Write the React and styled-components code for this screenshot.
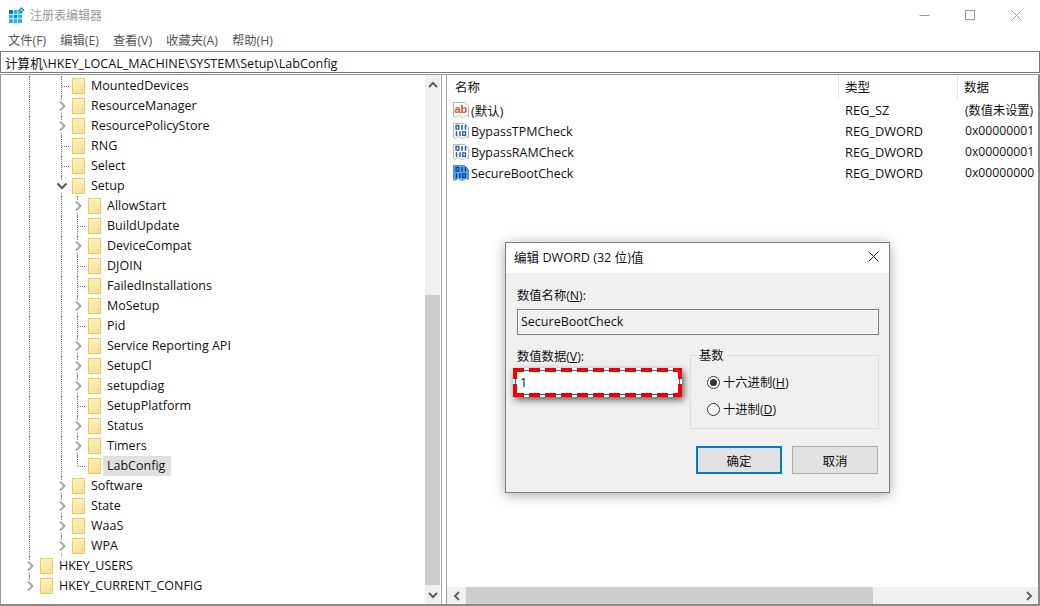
import React from "react";
import styled, { createGlobalStyle } from "styled-components";

const FONT = `"Open Sans", "Noto Sans CJK SC", sans-serif`;

const GlobalStyle = createGlobalStyle`
  html, body {
    margin: 0;
    padding: 0;
    background: #fff;
    overflow: hidden;
  }
  * {
    box-sizing: border-box;
  }
`;

const Window = styled.div`
  position: relative;
  width: 1040px;
  height: 606px;
  display: flex;
  flex-direction: column;
  background: #fff;
  font-family: ${FONT};
  font-size: 12.5px;
  color: #111;
`;

const TitleBar = styled.div`
  height: 30px;
  display: flex;
  align-items: center;
  padding-left: 9px;
  color: #9a9a9a;
  font-size: 12px;
`;

const TitleText = styled.span`
  margin-left: 5px;
`;

const WindowButtons = styled.div`
  margin-left: auto;
  display: flex;
  padding-right: 1px;
`;

const WindowButton = styled.div`
  width: 46px;
  height: 30px;
  display: flex;
  align-items: center;
  justify-content: center;
`;

const MenuBar = styled.div`
  height: 20px;
  display: flex;
  align-items: center;
  gap: 14px;
  padding-left: 8px;
  color: #555;
  font-size: 12.3px;
`;

const AddressBar = styled.div`
  height: 22px;
  margin-top: 1px;
  display: flex;
  align-items: center;
  padding-left: 4px;
  border: 1px solid #7a7a7a;
  font-size: 12.6px;
  color: #111;
`;

const Panes = styled.div`
  flex: 1;
  min-height: 0;
  display: flex;
  border-top: 1px solid #9a9a9a;
  border-left: 1px solid #9a9a9a;
  border-right: 2px solid #8a8a8a;
  border-bottom: 2px solid #8a8a8a;
  margin-top: 1px;
`;

const TreePane = styled.div`
  width: 441px;
  display: flex;
  border-right: 1px solid #a0a0a0;
`;

const Tree = styled.div`
  flex: 1;
  padding: 1px 0 0 21px;
  min-width: 0;
`;

const TreeRow = styled.div`
  height: 20px;
  display: flex;
  align-items: center;
`;

const GuideCell = styled.div`
  position: relative;
  width: 16px;
  height: 20px;
  flex: none;
  ${(p) =>
    p.$line &&
    `&::before {
      content: "";
      position: absolute;
      left: 7px;
      top: 0;
      height: ${p.$half ? "10px" : "20px"};
      border-left: 1px dotted #777;
    }`}
  ${(p) =>
    p.$twig &&
    `&::after {
      content: "";
      position: absolute;
      left: 8px;
      top: 10px;
      width: 7px;
      border-top: 1px dotted #777;
    }`}
`;

const ChevronBox = styled.span`
  position: absolute;
  left: 2px;
  top: 4px;
  width: 12px;
  height: 12px;
  background: #fff;
  display: flex;
  align-items: center;
  justify-content: center;
`;

const FolderBox = styled.span`
  flex: none;
  width: 13px;
  height: 16px;
  margin-left: 2px;
  display: flex;
`;

const TreeLabel = styled.span`
  margin-left: ${(p) => (p.$selected ? "2px" : "4px")};
  padding: 0 ${(p) => (p.$selected ? "6px" : "3px")} 0 ${(p) => (p.$selected ? "4px" : "2px")};
  height: 20px;
  line-height: 20px;
  white-space: nowrap;
  background: ${(p) => (p.$selected ? "#e0e0e0" : "transparent")};
`;

const VScroll = styled.div`
  width: 15px;
  flex: none;
  margin-right: 1px;
  display: flex;
  flex-direction: column;
  background: #f0f0f0;
`;

const ScrollArrow = styled.div`
  width: ${(p) => (p.$h ? "19px" : "15px")};
  height: ${(p) => (p.$h ? "17px" : "19px")};
  flex: none;
  display: flex;
  align-items: center;
  justify-content: center;
`;

const ScrollSpace = styled.div`
  flex: 1;
`;

const VThumb = styled.div`
  height: 290px;
  background: #cdcdcd;
  flex: none;
`;

const Splitter = styled.div`
  width: 5px;
  flex: none;
  background: #fff;
  border-right: 1px solid #a0a0a0;
`;

const ListPane = styled.div`
  flex: 1;
  min-width: 0;
  display: flex;
  flex-direction: column;
`;

const ListHeader = styled.div`
  height: 24px;
  display: flex;
  flex: none;
`;

const HeaderCell = styled.div`
  width: ${(p) => p.$w}px;
  padding-left: ${(p) => p.$pl || 6}px;
  line-height: 25px;
  font-size: 12.5px;
  border-right: ${(p) => (p.$end ? "none" : "1px solid #e5e5e5")};
`;

const ListBody = styled.div`
  flex: 1;
  min-height: 0;
`;

const ListRow = styled.div`
  height: 21px;
  display: flex;
  align-items: center;
`;

const NameCell = styled.div`
  width: 398px;
  display: flex;
  align-items: center;
  padding-left: 6px;
  white-space: nowrap;
`;

const NameText = styled.span`
  margin-top: 2px;
`;

const ValueIcon = styled.span`
  width: 16px;
  height: 16px;
  flex: none;
  margin-right: 2px;
  display: flex;
`;

const TypeCell = styled.div`
  width: 120px;
  white-space: nowrap;
  font-size: 12.8px;
`;

const DataCell = styled.div`
  white-space: nowrap;
  font-size: 12.2px;
  overflow: hidden;
`;

const HScroll = styled.div`
  height: 17px;
  flex: none;
  display: flex;
  background: #f0f0f0;
`;

const HThumb = styled.div`
  width: 407px;
  background: #cdcdcd;
  flex: none;
`;

const Dialog = styled.div`
  position: absolute;
  left: 505px;
  top: 242px;
  width: 385px;
  height: 251px;
  display: flex;
  flex-direction: column;
  background: #f0f0f0;
  border: 1px solid #7d7d7d;
  box-shadow: 0 2px 12px rgba(0, 0, 0, 0.35);
`;

const DialogTitle = styled.div`
  height: 30px;
  flex: none;
  background: #fff;
  display: flex;
  align-items: center;
  justify-content: space-between;
  padding: 0 10px 3px 8px;
  font-size: 12.6px;
`;

const DialogBody = styled.div`
  flex: 1;
  padding: 14px 10px 0 11px;
  display: flex;
  flex-direction: column;
`;

const FieldLabel = styled.label`
  display: block;
  height: 18px;
  line-height: 18px;
  font-size: 12.3px;
  color: #111;
  u {
    text-underline-offset: 1px;
  }
`;

const NameInput = styled.div`
  margin-top: 4px;
  height: 26px;
  width: 362px;
  border: 1px solid #7a7a7a;
  background: #f0f0f0;
  box-shadow: inset 0 0 0 1px #fff;
  padding-left: 3px;
  line-height: 23px;
  font-size: 12.5px;
`;

const DataRow = styled.div`
  margin-top: 13px;
  display: flex;
  justify-content: space-between;
  width: 362px;
`;

const DataColumn = styled.div`
  width: 168px;
  margin-left: -3px;
  padding-left: 3px;
`;

const DashedFrame = styled.div`
  position: relative;
  margin: 2px 0 0 -4px;
  width: 169px;
  height: 29px;
  padding: 2px;
  box-shadow: 2px 3px 7px rgba(0, 0, 0, 0.6);
  background: #fff;
  &::after {
    content: "";
    position: absolute;
    inset: 0;
    background:
      linear-gradient(90deg, #f00000 11px, transparent 11px) 0 0 / 16px 4px repeat-x,
      linear-gradient(90deg, #f00000 11px, transparent 11px) 0 100% / 16px 4px repeat-x,
      linear-gradient(#f00000 11px, transparent 11px) 0 0 / 4px 16px repeat-y,
      linear-gradient(#f00000 11px, transparent 11px) 100% 0 / 4px 16px repeat-y;
  }
`;

const DataInput = styled.div`
  height: 100%;
  border: 1px solid #0078d7;
  background: #fff;
  padding-left: 4px;
  line-height: 24px;
  font-size: 12.5px;
`;

const RadixGroup = styled.fieldset`
  position: relative;
  margin: 7px 0 0;
  width: 189px;
  height: 74px;
  border: 1px solid #dcdcdc;
  display: flex;
  flex-direction: column;
  align-items: flex-start;
  padding: 17px 0 0 16px;
  gap: 9px;
`;

const GroupTitle = styled.span`
  position: absolute;
  left: 6px;
  top: -9px;
  padding: 0 3px 0 2px;
  background: #f0f0f0;
  font-size: 12.3px;
  line-height: 18px;
`;

const RadioRow = styled.div`
  display: flex;
  align-items: center;
  height: 18px;
  font-size: 12.3px;
  gap: 3px;
`;

const RadioDot = styled.span`
  width: 13px;
  height: 13px;
  flex: none;
  border-radius: 50%;
  border: 1px solid #333;
  background: #fff;
  display: flex;
  align-items: center;
  justify-content: center;
  &::after {
    content: "";
    width: 7px;
    height: 7px;
    border-radius: 50%;
    background: ${(p) => (p.$on ? "#333" : "transparent")};
  }
`;

const ButtonRow = styled.div`
  margin-top: 17px;
  width: 361px;
  display: flex;
  justify-content: flex-end;
  gap: 10px;
`;

const DialogButton = styled.button`
  width: 86px;
  height: 28px;
  margin: 0;
  padding: 0;
  background: #e1e1e1;
  border: ${(p) => (p.$primary ? "2px solid #0078d7" : "1px solid #adadad")};
  font-family: ${FONT};
  font-size: 12.5px;
  color: #111;
`;

const RegistryIcon = () => (
  <svg width="16" height="16" viewBox="0 0 16 16">
    <rect x="0" y="3" width="13" height="13" fill="#1fb0f0" />
    <path d="M0 3h4v4H0z" fill="#0a6ab8" />
    <path d="M4.5 7.5h4v4h-4z" fill="#0f86d8" />
    <path d="M4.3 3v13M8.7 3v13M0 7.3h13M0 11.7h13" stroke="#fff" strokeWidth="0.8" />
    <path d="M12.5 0l3 3-3 3-3-3z" fill="#2a8fd0" />
    <circle cx="12.5" cy="3" r="1.1" fill="#bfe6fa" />
  </svg>
);

const MinimizeIcon = () => (
  <svg width="11" height="11" viewBox="0 0 11 11">
    <path d="M0.5 5.5h10" stroke="#999" strokeWidth="1" />
  </svg>
);

const MaximizeIcon = () => (
  <svg width="10" height="10" viewBox="0 0 10 10">
    <rect x="0.5" y="0.5" width="9" height="9" fill="none" stroke="#999" />
  </svg>
);

const CloseIcon = ({ color = "#999" }) => (
  <svg width="11" height="11" viewBox="0 0 11 11">
    <path d="M0.5 0.5l10 10M10.5 0.5l-10 10" stroke={color} strokeWidth="1" />
  </svg>
);

const FolderIcon = () => (
  <svg width="13" height="16" viewBox="0 0 13 16">
    <defs>
      <linearGradient id="folderFill" x1="0" y1="0" x2="0" y2="1">
        <stop offset="0" stopColor="#ffefb8" />
        <stop offset="1" stopColor="#fbe29a" />
      </linearGradient>
    </defs>
    <rect x="0.5" y="0.5" width="12" height="15" fill="url(#folderFill)" stroke="#eecb62" />
    <path d="M10 15.5v-4h2.5" fill="#fff4cf" stroke="#eecb62" />
  </svg>
);

const Chevron = ({ open }) => (
  <svg width="12" height="12" viewBox="0 0 12 12">
    {open ? (
      <path d="M1.5 3.5L6 8l4.5-4.5" fill="none" stroke="#555" strokeWidth="2" />
    ) : (
      <path d="M4 1.5L8.5 6 4 10.5" fill="none" stroke="#a8a8a8" strokeWidth="2" />
    )}
  </svg>
);

const ScrollChevron = ({ dir }) => {
  const paths = {
    up: "M1 7l4-4 4 4",
    down: "M1 3l4 4 4-4",
    left: "M7 1L3 5l4 4",
    right: "M3 1l4 4-4 4"
  };
  return (
    <svg width="10" height="10" viewBox="0 0 10 10">
      <path d={paths[dir]} fill="none" stroke="#606060" strokeWidth="2" />
    </svg>
  );
};

const SheetIcon = ({ fill = "#fff", stroke = "#b4b4b4", children }) => (
  <svg width="16" height="16" viewBox="0 0 16 16">
    <path
      d="M0.5 0.5h11l4 4v10c-2-1-3-1-4 0s-3 1-4 0-3-1-4 0-2 1-3 0z"
      fill={fill}
      stroke={stroke}
    />
    {children}
  </svg>
);

const StringIcon = () => (
  <SheetIcon>
    <text x="1.5" y="11" fontFamily='"Liberation Sans", sans-serif' fontSize="11" fontWeight="700" fill="#d9502e">
      ab
    </text>
  </SheetIcon>
);

const BinaryIcon = ({ selected }) => {
  const ink = selected ? "#123f8a" : "#1c55c0";
  return (
    <SheetIcon fill={selected ? "#5aa6ea" : "#fff"} stroke={selected ? "#4a90d8" : "#b4b4b4"}>
      <path d="M3 2.5h2.8v3.6H3z" fill="none" stroke={ink} strokeWidth="1.3" />
      <path d="M9 2v4.8M12.5 2v4.8M3.5 8.2v4.8M7 8.2v4.8" stroke={ink} strokeWidth="1.5" />
      <path d="M9.7 8.8h2.8v3.6H9.7z" fill="none" stroke={ink} strokeWidth="1.3" />
    </SheetIcon>
  );
};

// guides: one entry per indent column, "line" draws the dotted vertical
const L1 = ["line", null];
const treeRows = [
  { label: "MountedDevices", guides: L1, kind: "leaf" },
  { label: "ResourceManager", guides: L1, kind: "closed" },
  { label: "ResourcePolicyStore", guides: L1, kind: "closed" },
  { label: "RNG", guides: L1, kind: "leaf" },
  { label: "Select", guides: L1, kind: "leaf" },
  { label: "Setup", guides: L1, kind: "open" }
];

const L2 = ["line", null, "line"];
const setupChildren = [
  ["AllowStart", "closed"],
  ["BuildUpdate", "leaf"],
  ["DeviceCompat", "closed"],
  ["DJOIN", "leaf"],
  ["FailedInstallations", "leaf"],
  ["MoSetup", "closed"],
  ["Pid", "leaf"],
  ["Service Reporting API", "closed"],
  ["SetupCl", "closed"],
  ["setupdiag", "closed"],
  ["SetupPlatform", "leaf"],
  ["Status", "closed"],
  ["Timers", "closed"],
  ["LabConfig", "last", true]
];
setupChildren.forEach(([label, kind, selected]) =>
  treeRows.push({ label, guides: L2, kind, selected })
);

["Software", "State", "WaaS", "WPA"].forEach((label) =>
  treeRows.push({ label, guides: L1, kind: "closed" })
);
treeRows.push({ label: "HKEY_USERS", guides: [], kind: "closed" });
treeRows.push({ label: "HKEY_CURRENT_CONFIG", guides: [], kind: "closed", end: true });

const values = [
  { name: "(默认)", type: "REG_SZ", data: "(数值未设置)", icon: <StringIcon /> },
  { name: "BypassTPMCheck", type: "REG_DWORD", data: "0x00000001", icon: <BinaryIcon /> },
  { name: "BypassRAMCheck", type: "REG_DWORD", data: "0x00000001", icon: <BinaryIcon /> },
  { name: "SecureBootCheck", type: "REG_DWORD", data: "0x00000000", icon: <BinaryIcon selected /> }
];

const Row = ({ row }) => (
  <TreeRow>
    {row.guides.map((g, i) => (
      <GuideCell key={i} $line={g === "line"} />
    ))}
    <GuideCell
      $line
      $half={row.kind === "last" || row.end}
      $twig={row.kind === "leaf" || row.kind === "last"}
    >
      {(row.kind === "closed" || row.kind === "open") && (
        <ChevronBox>
          <Chevron open={row.kind === "open"} />
        </ChevronBox>
      )}
    </GuideCell>
    <FolderBox>
      <FolderIcon />
    </FolderBox>
    <TreeLabel $selected={row.selected}>{row.label}</TreeLabel>
  </TreeRow>
);

export default function App() {
  return (
    <Window>
      <GlobalStyle />
      <TitleBar>
        <RegistryIcon />
        <TitleText>注册表编辑器</TitleText>
        <WindowButtons>
          <WindowButton>
            <MinimizeIcon />
          </WindowButton>
          <WindowButton>
            <MaximizeIcon />
          </WindowButton>
          <WindowButton>
            <CloseIcon />
          </WindowButton>
        </WindowButtons>
      </TitleBar>
      <MenuBar>
        <span>文件(F)</span>
        <span>编辑(E)</span>
        <span>查看(V)</span>
        <span>收藏夹(A)</span>
        <span>帮助(H)</span>
      </MenuBar>
      <AddressBar>计算机\HKEY_LOCAL_MACHINE\SYSTEM\Setup\LabConfig</AddressBar>
      <Panes>
        <TreePane>
          <Tree>
            {treeRows.map((row) => (
              <Row key={row.label} row={row} />
            ))}
          </Tree>
          <VScroll>
            <ScrollArrow>
              <ScrollChevron dir="up" />
            </ScrollArrow>
            <ScrollSpace />
            <VThumb />
            <ScrollArrow>
              <ScrollChevron dir="down" />
            </ScrollArrow>
          </VScroll>
        </TreePane>
        <Splitter />
        <ListPane>
          <ListHeader>
            <HeaderCell $w={392} $pl={8}>名称</HeaderCell>
            <HeaderCell $w={119}>类型</HeaderCell>
            <HeaderCell $w={80} $end>数据</HeaderCell>
          </ListHeader>
          <ListBody>
            {values.map((v) => (
              <ListRow key={v.name}>
                <NameCell>
                  <ValueIcon>{v.icon}</ValueIcon>
                  <NameText>{v.name}</NameText>
                </NameCell>
                <TypeCell>{v.type}</TypeCell>
                <DataCell>{v.data}</DataCell>
              </ListRow>
            ))}
          </ListBody>
          <HScroll>
            <ScrollArrow $h>
              <ScrollChevron dir="left" />
            </ScrollArrow>
            <HThumb />
            <ScrollSpace />
            <ScrollArrow $h>
              <ScrollChevron dir="right" />
            </ScrollArrow>
          </HScroll>
        </ListPane>
      </Panes>
      <Dialog>
        <DialogTitle>
          <span>编辑 DWORD (32 位)值</span>
          <CloseIcon color="#222" />
        </DialogTitle>
        <DialogBody>
          <FieldLabel>
            数值名称(<u>N</u>):
          </FieldLabel>
          <NameInput>SecureBootCheck</NameInput>
          <DataRow>
            <DataColumn>
              <FieldLabel>
                数值数据(<u>V</u>):
              </FieldLabel>
              <DashedFrame>
                <DataInput>1</DataInput>
              </DashedFrame>
            </DataColumn>
            <RadixGroup>
              <GroupTitle>基数</GroupTitle>
              <RadioRow>
                <RadioDot $on />
                <span>
                  十六进制(<u>H</u>)
                </span>
              </RadioRow>
              <RadioRow>
                <RadioDot />
                <span>
                  十进制(<u>D</u>)
                </span>
              </RadioRow>
            </RadixGroup>
          </DataRow>
          <ButtonRow>
            <DialogButton $primary>确定</DialogButton>
            <DialogButton>取消</DialogButton>
          </ButtonRow>
        </DialogBody>
      </Dialog>
    </Window>
  );
}
